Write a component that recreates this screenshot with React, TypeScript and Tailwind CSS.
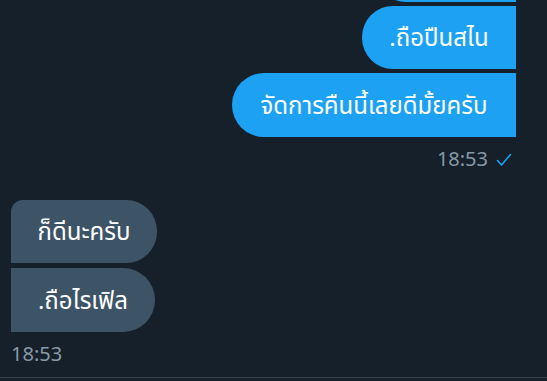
const font = { fontFamily: '"Noto Sans Thai", "Noto Sans", "DejaVu Sans", sans-serif' };

function Check() {
  return (
    <svg width="16" height="14" viewBox="0 0 16 14" fill="none">
      <path d="M1.5 7.5 L5.5 12 L14.5 1.5" stroke="#1da1f2" strokeWidth="1.6" strokeLinecap="round" strokeLinejoin="round" />
    </svg>
  );
}

export default function App() {
  return (
    <div
      className="flex h-[381px] w-[547px] flex-col overflow-hidden bg-[#15202b] text-white"
      style={font}
    >
      <div className="flex flex-col items-end gap-[4px] pr-[31px]">
        <div className="-mt-[60px] h-[62px] w-[141px] rounded-l-[31px] bg-[#1da1f2]" />
        <div className="flex h-[63px] w-[154px] items-center justify-center rounded-l-[31px] bg-[#1da1f2] pt-[3px] text-[24px]">
          .ถือปืนสไน
        </div>
        <div className="flex h-[64px] w-[284px] items-center justify-center rounded-l-[32px] bg-[#1da1f2] pt-[3px] text-[24px]">
          จัดการคืนนี้เลยดีมั้ยครับ
        </div>
        <div className="mt-[6px] flex h-[26px] items-center gap-[8px] pr-[4px] text-[20px] leading-none text-[#8899a6]">
          <span>18:53</span>
          <Check />
        </div>
      </div>

      <div className="mt-[27px] flex flex-col items-start gap-[5px] pl-[11px]">
        <div className="flex h-[63px] w-[146px] items-center justify-center rounded-tl-[12px] rounded-r-[31px] bg-[#3d5466] pt-[3px] text-[24px]">
          ก็ดีนะครับ
        </div>
        <div className="flex h-[64px] w-[144px] items-center justify-center rounded-r-[32px] bg-[#3d5466] pt-[3px] text-[24px]">
          .ถือไรเฟิล
        </div>
        <div className="mt-[5px] flex h-[26px] items-center text-[20px] leading-none text-[#8899a6]">18:53</div>
      </div>

      <div className="mt-auto mb-[3px] h-px w-full bg-[#38444d]" />
    </div>
  );
}
